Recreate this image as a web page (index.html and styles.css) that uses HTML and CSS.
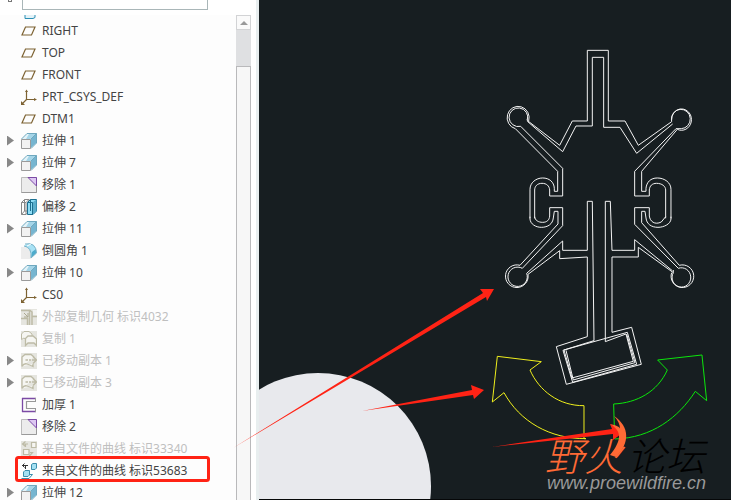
FILE: index.html
```html
<!DOCTYPE html>
<html lang="zh-CN">

<head>
    <meta charset="UTF-8" />
    <meta name="viewport" content="width=device-width, initial-scale=1.0" />
    <title>模型树</title>
    <link rel="stylesheet" href="styles.css">
</head>

<body>

    <!-- tree icons -->
    <svg class="icon-defs" width="0" height="0">
        <symbol id="plane" viewBox="0 0 16 16">
            <path d="M4.500 4H14L10.500 12H1Z" fill="none" stroke="#7d6232" stroke-width="1.200" />
        </symbol>
        <symbol id="csys" viewBox="0 0 16 16">
            <path d="M5.500 2V10.500H15M5.500 10.500L1 15" fill="none" stroke="#7d6232" stroke-width="1.200" />
            <path d="M4 3L5.500 0.500L7 3ZM13 9L16 10.500L13 12ZM0 12L0 16L4 16Z" fill="#7d6232" />
        </symbol>
        <symbol id="extrude" viewBox="0 0 16 16">
            <path d="M0.500 6L6 0.500H15.500V10L10 15.500H0.500Z" fill="#e4f3f8" />
            <path d="M5 6L8 1H15L9.500 6Z" fill="#a5d5e8" />
            <path d="M10 6L15.500 0.500V10L10 15Z" fill="#76b5d0" />
            <path d="M10 15L15.500 10V15.500H10Z" fill="#fdfdfd" />
            <path d="M0.500 6L6 0.500H15.500V10L10 15.500M10 6L15.500 0.500" fill="none" stroke="#6fa8bf" />
            <path d="M0.500 6.500H9.500V15.500H0.500Z" fill="#f2f2f2" stroke="#9a9a9a" />
        </symbol>
        <symbol id="remove" viewBox="0 0 16 16">
            <path d="M0.500 0.500H15.500V15.500H0.500Z" fill="#ececec" stroke="#bbb" />
            <path d="M7 0.500H15.500V9Z" fill="#ddc8f2" stroke="#7b4aa5" />
            <path d="M15.500 9V15.500H0.500" fill="none" stroke="#999" />
        </symbol>
        <symbol id="offset" viewBox="0 0 16 16">
            <path d="M0.500 3.500L3.500 0.500H8V12L5 15.500H0.500ZM0.500 3.500H5V15.500M3.500 0.500V12H8M5 3.500L8 0.500M0.500 15.500L3.500 12" fill="#fff" stroke="#888" />
            <path d="M6.500 3.500L9.500 0.500H15.500V12L12 15.500H6.500Z" fill="#8edcf5" stroke="#1b6f90" />
            <path d="M11.500 3.500L15.500 0.500V12L11.500 15.500Z" fill="#5aaecc" />
            <path d="M6.500 3.500H11.500V15.500M9.500 0.500V12" fill="none" stroke="#1b6f90" />
        </symbol>
        <symbol id="round" viewBox="0 0 16 16">
            <path d="M0 4H5C9 5 10 8 10 16H0Z" fill="#ececec" />
            <path d="M3 3Q5 0 9 0.500Q15 1 15.500 10L10 15Q11 6 3 3Z" fill="#a8e2f5" />
            <path d="M11 9L15 6L15.500 10L10 15Z" fill="#4daccc" />
            <path d="M3 3Q11 4 10 15M4 1Q15 -1 15.500 10L10 15" fill="none" stroke="#7cb2c7" />
            <path d="M6 3L10 1" stroke="#fff" />
        </symbol>
        <symbol id="extcopy" viewBox="0 0 16 16">
            <path d="M0 0H16V16H0Z" fill="#e5e5df" />
            <path d="M0 1.500H8.500V16M8.500 1L11 3V16M11 7.500H16M0 9.500H6.500V16" fill="none" stroke="#bdbba6" stroke-width="1.500" />
            <path d="M3 4L7 8M7 4V8H3" fill="none" stroke="#aaa78f" />
            <path d="M12 1H16V6H12Z" fill="#f4f4f2" />
        </symbol>
        <symbol id="copy" viewBox="0 0 16 16">
            <path d="M0 0H16V16H0Z" fill="#e5e5df" />
            <path d="M0.500 8.500V3L3 0.500H8L11 3V5M0.500 8.500Q3 6 5 8" fill="#f6f6f2" stroke="#bdbba6" />
            <path d="M4.500 14.500V7.500L7 5H12L15.500 8V14.500L13 12H7Z" fill="#f6f6f2" stroke="#bdbba6" stroke-width="1.300" />
        </symbol>
        <symbol id="moved" viewBox="0 0 16 16">
            <path d="M0 0H16V16H0Z" fill="#e5e5df" />
            <path d="M1 13.500V4L4 1.500H10L13 4M1 13.500Q3 10 6 11T12 13.500V11" fill="#f6f6f2" stroke="#bdbba6" stroke-width="1.300" />
            <path d="M4.500 7H7M8 7H10M11 7H15M12 3.500L15.500 7L12 10.500" fill="none" stroke="#bdbba6" stroke-width="1.500" />
        </symbol>
        <symbol id="thicken" viewBox="0 0 16 16">
            <path d="M1 1.500H15M1 14.500H15M1.500 1V15" fill="none" stroke="#7b4aa5" stroke-width="1.300" />
            <path d="M15 4.500H5.500V11.500H15" fill="none" stroke="#999" stroke-width="1.200" />
            <path d="M14.500 1V5M14.500 11V15" stroke="#999" />
        </symbol>
        <symbol id="curve" viewBox="0 0 16 16">
            <path d="M1 2.500H7M3.500 0.500L1.500 2.500L3.500 4.500M4.500 3V6" fill="none" stroke="#333" />
            <path d="M10.500 1.500L12 0.500H15.500V5L14 6.500H10.500Z" fill="#a4e0f2" stroke="#3b8eac" />
            <path d="M2.500 9L4 7.500H8.500V12L7 13.500H2.500Z" fill="#a4e0f2" stroke="#3b8eac" />
            <path d="M0.500 15.500H8L11.500 11.500H9" fill="none" stroke="#3b8eac" />
        </symbol>
        <symbol id="curve-off" viewBox="0 0 16 16">
            <path d="M0 0H16V16H0Z" fill="#e5e5df" />
            <path d="M1 3H7M4.500 0.500L1.500 3L4.500 5.500M4.500 3V6M0.500 15.500H8L11.500 11.500H9" fill="none" stroke="#bdbba6" stroke-width="1.200" />
            <path d="M10.500 1.500H15V6.500H10.500ZM2.500 8.500H8V13.500H2.500Z" fill="#f6f6f2" stroke="#bdbba6" stroke-width="1.200" />
        </symbol>
    </svg>

    <aside class="sidebar">
        <div class="filter">
            <svg class="filter-icon" width="4" height="2"><path d="M0.500 0V1.500M3.500 0V1.500M0 1.500H4" fill="none" stroke="#777" /></svg>
            <input type="text" class="filter-input" aria-label="搜索" />
        </div>
        <div class="tree-area">
            <ul class="tree">
                <li class="row cut"><svg class="icon"><path d="M4 8H14V14.500L12 15.500H4Z" fill="#e3f2f7" stroke="#2b8fb5" /></svg></li>
                <li class="row"><svg class="icon"><use href="#plane" /></svg>RIGHT</li>
                <li class="row"><svg class="icon"><use href="#plane" /></svg>TOP</li>
                <li class="row"><svg class="icon"><use href="#plane" /></svg>FRONT</li>
                <li class="row"><svg class="icon"><use href="#csys" /></svg>PRT_CSYS_DEF</li>
                <li class="row"><svg class="icon"><use href="#plane" /></svg>DTM1</li>
                <li class="row"><button class="expand" aria-label="展开"></button><svg class="icon"><use href="#extrude" /></svg>拉伸 1</li>
                <li class="row"><button class="expand" aria-label="展开"></button><svg class="icon"><use href="#extrude" /></svg>拉伸 7</li>
                <li class="row"><svg class="icon"><use href="#remove" /></svg>移除 1</li>
                <li class="row"><svg class="icon"><use href="#offset" /></svg>偏移 2</li>
                <li class="row"><button class="expand" aria-label="展开"></button><svg class="icon"><use href="#extrude" /></svg>拉伸 11</li>
                <li class="row"><svg class="icon"><use href="#round" /></svg>倒圆角 1</li>
                <li class="row"><button class="expand" aria-label="展开"></button><svg class="icon"><use href="#extrude" /></svg>拉伸 10</li>
                <li class="row"><svg class="icon"><use href="#csys" /></svg>CS0</li>
                <li class="row off"><svg class="icon"><use href="#extcopy" /></svg>外部复制几何 标识4032</li>
                <li class="row off"><svg class="icon"><use href="#copy" /></svg>复制 1</li>
                <li class="row off"><button class="expand" aria-label="展开"></button><svg class="icon"><use href="#moved" /></svg>已移动副本 1</li>
                <li class="row off"><button class="expand" aria-label="展开"></button><svg class="icon"><use href="#moved" /></svg>已移动副本 3</li>
                <li class="row"><svg class="icon"><use href="#thicken" /></svg>加厚 1</li>
                <li class="row"><svg class="icon"><use href="#remove" /></svg>移除 2</li>
                <li class="row off"><svg class="icon"><use href="#curve-off" /></svg>来自文件的曲线 标识33340</li>
                <li class="row"><svg class="icon"><use href="#curve" /></svg>来自文件的曲线 标识53683</li>
                <li class="row"><button class="expand" aria-label="展开"></button><svg class="icon"><use href="#extrude" /></svg>拉伸 12</li>
            </ul>
            <div class="scrollbar">
                <button class="scroll-up" aria-label="向上滚动"></button>
                <div class="track"></div>
                <div class="thumb"></div>
            </div>
        </div>
    </aside>

    <main class="viewport">
        <svg class="model" width="472" height="500" viewBox="259 0 472 500">
            <circle cx="318" cy="486" r="113" fill="#e8e9ed" />

            <!-- upper half of the sketch -->
            <g transform="translate(490 40) scale(0.3333)" fill="none" stroke="#f4f4f4" stroke-width="3">
                <path d="M110 240L209 316L247 243H292V31H355V243H405L445 316L545 245" />
                <path d="M112 244L218 335L258 258H307V52H341V262H390L440 340L548 252" />
                <path d="M116 243A33 34 0 1 0 76 266L203 394V454H193V445C192 426 178 414 158 414C138 414 120 428 120 448V535" />
                <path d="M112 240A28 28 0 1 0 92 259L218 385V468H179V450C178 438 170 430 156 430C142 430 134 439 134 450V535" />
                <path d="M545 245A30 32 0 1 1 562 268L455 394V454H468V445C470 426 482 414 502 414C524 414 543 428 543 448V535" />
                <path d="M545 240A28 29 0 1 1 574 266H558L434 394V468H478V450C479 438 486 430 500 430C516 430 527 439 527 450V535" />
            </g>

            <!-- lower half with the plate -->
            <g transform="translate(490 190) scale(0.3333)" fill="none" stroke="#f4f4f4" stroke-width="3">
                <path d="M120 80V87C121 102 137 112 154 112C174 112 188 102 190 84L193 64H204V102L90 226A34 34 0 1 0 114 253L209 182V206L292 201V440L199 470L229 583L454 523L425 412L366 427V201H445V172L550 248" />
                <path d="M134 80C135 91 145 97 158 97C171 97 178 90 179 78V53H218V107L97 235A29 29 0 1 0 110 250L218 153V181H292V34H307L312 452L219 481L248 577L440 523L412 427L222 480L246 564L430 514L408 432L346 455V34H361L366 181H434V149L547 242" />
                <path d="M228 481L250 570L435 518L410 432" />
                <path d="M543 80V87C542 102 522 112 504 112C484 112 470 102 468 84L465 64H455V98L568 226A34 34 0 1 1 545 248" />
                <path d="M527 80L514 96C494 106 480 94 478 78V53H434V103L565 235A28 29 0 1 1 550 248V240" />
            </g>

            <!-- move arrows -->
            <g transform="translate(480 340) scale(0.3333)" fill="none" stroke-width="3">
                <path d="M52 49L184 65L150 90C177 152 237 198 312 197V296H318C209 297 119 244 72 158L37 186Z" stroke="#f0f01c" />
                <path d="M666 45L680 182L646 154C596 232 516 294 404 297L401 192C471 189 533 155 562 90L533 60Z" stroke="#0be60b" />
            </g>
        </svg>
    </main>

    <!-- red marks over tree and model -->
    <svg class="marks" width="731" height="500" viewBox="0 0 731 500">
        <rect x="16.500" y="457.500" width="192" height="23" rx="2" fill="none" stroke="#ff2315" stroke-width="3" />
        <g fill="#ff2315">
            <path d="M233 448L483 293L480 289L494 289L487 301L486 297Z" />
            <path d="M362 411L472 390L471 385L484 390L474 399L473 395Z" />
            <path d="M492 447L612 429L610 424L625 431L613 440L613 434Z" />
        </g>
        <path d="M614 416C630 427 630 443 616 457L610 455C622 440 622 431 610 424C616 425 620 427 620 429C620 425 618 420 614 416Z" fill="#ff6a35" />
    </svg>

    <div class="watermark">
        <div class="brand"><span class="brand-fire">野火</span><span>论坛</span></div>
        <div class="site">www.proewildfire.cn</div>
    </div>

</body>

</html>
```
FILE: styles.css
```css
* {
    box-sizing: border-box;
}

body {
    margin: 0;
    height: 100vh;
    display: flex;
    position: relative;
    overflow: hidden;
    background-color: #171e21;
    font-family: "Noto Sans", "Noto Sans CJK SC", sans-serif;
    font-size: 12px;
    color: #444;
}

.icon-defs {
    position: absolute;
}

.sidebar {
    width: 259px;
    flex-shrink: 0;
    display: flex;
    flex-direction: column;
    background-color: #fff;
    border-right: 3px solid #e8eeef;
}

.filter {
    height: 15px;
    flex-shrink: 0;
    display: flex;
    align-items: flex-start;
    gap: 10px;
    padding-left: 8px;
}

.filter-input {
    width: 186px;
    height: 10px;
    padding: 0;
    border: 1px solid #a9b6b8;
    border-top: 0;
    background-color: #fff;
    outline: none;
}

.tree-area {
    flex: 1;
    min-height: 0;
    display: flex;
    padding-right: 5px;
}

.tree {
    flex: 1;
    margin: 0;
    padding: 0;
    list-style: none;
    overflow: hidden;
    background-color: #fdfdfd;
}

.row {
    position: relative;
    height: 22px;
    padding-left: 21px;
    display: flex;
    align-items: center;
    gap: 5px;
    line-height: 20px;
    padding-bottom: 1px;
    white-space: nowrap;
}

/* row scrolled half out of view */
.cut {
    height: 5px;
    align-items: flex-end;
    overflow: hidden;
}

.off {
    color: #bfbfbf;
}

.icon {
    width: 16px;
    height: 16px;
    flex-shrink: 0;
}

.expand {
    position: absolute;
    left: 7px;
    width: 7px;
    height: 10px;
    padding: 0;
    border: 0;
    background-color: #888;
    clip-path: polygon(0 0, 100% 50%, 0 100%);
}

.scrollbar {
    width: 15px;
    display: flex;
    flex-direction: column;
}

.scroll-up {
    height: 15px;
    padding: 0;
    display: flex;
    align-items: center;
    justify-content: center;
    border: 1px solid #d2d3d5;
    background-color: #fafafa;
}

.scroll-up::before {
    content: "";
    border: 4px solid transparent;
    border-top: 0;
    border-bottom-color: #999;
}

.track {
    height: 36px;
    background-color: #dfe0e2;
}

.thumb {
    flex: 1;
    border: 1px solid #b9b9bb;
    border-bottom: 0;
    background-color: #f7f7f7;
}

.viewport {
    flex: 1;
    min-width: 0;
    overflow: hidden;
    border-bottom: 1px solid #050708;
}

.model {
    display: block;
}

.marks {
    position: absolute;
    top: 0;
    left: 0;
    pointer-events: none;
}

.watermark {
    position: absolute;
    left: 545px;
    top: 434px;
    font-style: italic;
    pointer-events: none;
}

.brand {
    display: flex;
    gap: 4px;
    font-family: "Noto Sans CJK SC", sans-serif;
    font-size: 39px;
    font-weight: 300;
    line-height: 40px;
    color: #000;
}

.brand-fire {
    color: #ff6a35;
}

.site {
    padding-left: 2px;
    font-family: "Liberation Sans", Arial, sans-serif;
    font-size: 18px;
    line-height: 18px;
    color: #999;
}
```
